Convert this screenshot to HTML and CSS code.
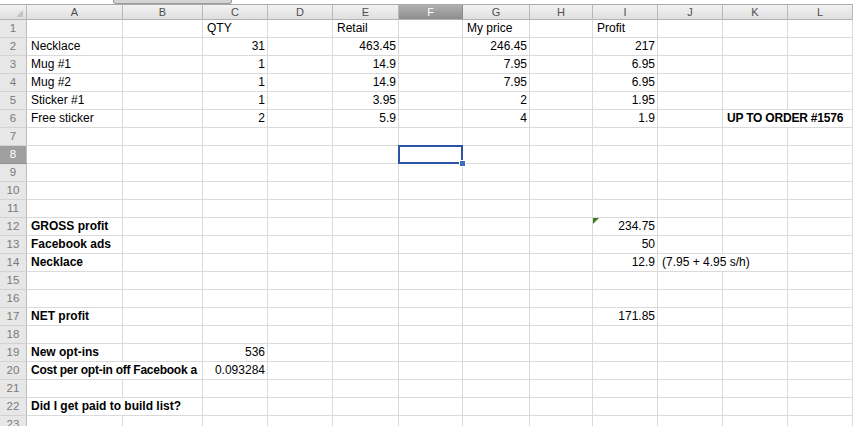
FILE: index.html
```html
<!DOCTYPE html>
<html>
<head>
<meta charset="utf-8">
<link rel="stylesheet" href="styles.css">
</head>
<body>
<div class="sheet">
  <div class="top"><div class="tb"></div></div>
  <div class="row hdr">
    <div class="h corner"></div><div class="h">A</div><div class="h">B</div><div class="h">C</div><div class="h">D</div><div class="h">E</div><div class="h hsel">F</div><div class="h">G</div><div class="h">H</div><div class="h">I</div><div class="h">J</div><div class="h">K</div><div class="h">L</div>
  </div>
  <div class="row"><div class="c rn">1</div><div class="c"></div><div class="c"></div><div class="c">QTY</div><div class="c"></div><div class="c">Retail</div><div class="c"></div><div class="c">My price</div><div class="c"></div><div class="c">Profit</div><div class="c"></div><div class="c"></div><div class="c"></div></div>
  <div class="row"><div class="c rn">2</div><div class="c">Necklace</div><div class="c"></div><div class="c n">31</div><div class="c"></div><div class="c n">463.45</div><div class="c"></div><div class="c n">246.45</div><div class="c"></div><div class="c n">217</div><div class="c"></div><div class="c"></div><div class="c"></div></div>
  <div class="row"><div class="c rn">3</div><div class="c">Mug #1</div><div class="c"></div><div class="c n">1</div><div class="c"></div><div class="c n">14.9</div><div class="c"></div><div class="c n">7.95</div><div class="c"></div><div class="c n">6.95</div><div class="c"></div><div class="c"></div><div class="c"></div></div>
  <div class="row"><div class="c rn">4</div><div class="c">Mug #2</div><div class="c"></div><div class="c n">1</div><div class="c"></div><div class="c n">14.9</div><div class="c"></div><div class="c n">7.95</div><div class="c"></div><div class="c n">6.95</div><div class="c"></div><div class="c"></div><div class="c"></div></div>
  <div class="row"><div class="c rn">5</div><div class="c">Sticker #1</div><div class="c"></div><div class="c n">1</div><div class="c"></div><div class="c n">3.95</div><div class="c"></div><div class="c n">2</div><div class="c"></div><div class="c n">1.95</div><div class="c"></div><div class="c"></div><div class="c"></div></div>
  <div class="row"><div class="c rn">6</div><div class="c">Free sticker</div><div class="c"></div><div class="c n">2</div><div class="c"></div><div class="c n">5.9</div><div class="c"></div><div class="c n">4</div><div class="c"></div><div class="c n">1.9</div><div class="c"></div><div class="c b s2 tight">UP TO ORDER #1576</div></div>
  <div class="row"><div class="c rn">7</div><div class="c"></div><div class="c"></div><div class="c"></div><div class="c"></div><div class="c"></div><div class="c"></div><div class="c"></div><div class="c"></div><div class="c"></div><div class="c"></div><div class="c"></div><div class="c"></div></div>
  <div class="row"><div class="c rn rsel">8</div><div class="c"></div><div class="c"></div><div class="c"></div><div class="c"></div><div class="c"></div><div class="c active"><div class="selbox"></div><div class="handle"></div></div><div class="c"></div><div class="c"></div><div class="c"></div><div class="c"></div><div class="c"></div><div class="c"></div></div>
  <div class="row"><div class="c rn">9</div><div class="c"></div><div class="c"></div><div class="c"></div><div class="c"></div><div class="c"></div><div class="c"></div><div class="c"></div><div class="c"></div><div class="c"></div><div class="c"></div><div class="c"></div><div class="c"></div></div>
  <div class="row"><div class="c rn">10</div><div class="c"></div><div class="c"></div><div class="c"></div><div class="c"></div><div class="c"></div><div class="c"></div><div class="c"></div><div class="c"></div><div class="c"></div><div class="c"></div><div class="c"></div><div class="c"></div></div>
  <div class="row"><div class="c rn">11</div><div class="c"></div><div class="c"></div><div class="c"></div><div class="c"></div><div class="c"></div><div class="c"></div><div class="c"></div><div class="c"></div><div class="c"></div><div class="c"></div><div class="c"></div><div class="c"></div></div>
  <div class="row"><div class="c rn">12</div><div class="c b">GROSS profit</div><div class="c"></div><div class="c"></div><div class="c"></div><div class="c"></div><div class="c"></div><div class="c"></div><div class="c"></div><div class="c n note"><span class="tri"></span>234.75</div><div class="c"></div><div class="c"></div><div class="c"></div></div>
  <div class="row"><div class="c rn">13</div><div class="c b">Facebook ads</div><div class="c"></div><div class="c"></div><div class="c"></div><div class="c"></div><div class="c"></div><div class="c"></div><div class="c"></div><div class="c n">50</div><div class="c"></div><div class="c"></div><div class="c"></div></div>
  <div class="row"><div class="c rn">14</div><div class="c b">Necklace</div><div class="c"></div><div class="c"></div><div class="c"></div><div class="c"></div><div class="c"></div><div class="c"></div><div class="c"></div><div class="c n">12.9</div><div class="c s2">(7.95 + 4.95 s/h)</div><div class="c"></div></div>
  <div class="row"><div class="c rn">15</div><div class="c"></div><div class="c"></div><div class="c"></div><div class="c"></div><div class="c"></div><div class="c"></div><div class="c"></div><div class="c"></div><div class="c"></div><div class="c"></div><div class="c"></div><div class="c"></div></div>
  <div class="row"><div class="c rn">16</div><div class="c"></div><div class="c"></div><div class="c"></div><div class="c"></div><div class="c"></div><div class="c"></div><div class="c"></div><div class="c"></div><div class="c"></div><div class="c"></div><div class="c"></div><div class="c"></div></div>
  <div class="row"><div class="c rn">17</div><div class="c b">NET profit</div><div class="c"></div><div class="c"></div><div class="c"></div><div class="c"></div><div class="c"></div><div class="c"></div><div class="c"></div><div class="c n">171.85</div><div class="c"></div><div class="c"></div><div class="c"></div></div>
  <div class="row"><div class="c rn">18</div><div class="c"></div><div class="c"></div><div class="c"></div><div class="c"></div><div class="c"></div><div class="c"></div><div class="c"></div><div class="c"></div><div class="c"></div><div class="c"></div><div class="c"></div><div class="c"></div></div>
  <div class="row"><div class="c rn">19</div><div class="c b">New opt-ins</div><div class="c"></div><div class="c n">536</div><div class="c"></div><div class="c"></div><div class="c"></div><div class="c"></div><div class="c"></div><div class="c"></div><div class="c"></div><div class="c"></div><div class="c"></div></div>
  <div class="row"><div class="c rn">20</div><div class="c b s2 tight2">Cost per opt-in off Facebook a</div><div class="c n">0.093284</div><div class="c"></div><div class="c"></div><div class="c"></div><div class="c"></div><div class="c"></div><div class="c"></div><div class="c"></div><div class="c"></div><div class="c"></div></div>
  <div class="row"><div class="c rn">21</div><div class="c"></div><div class="c"></div><div class="c"></div><div class="c"></div><div class="c"></div><div class="c"></div><div class="c"></div><div class="c"></div><div class="c"></div><div class="c"></div><div class="c"></div><div class="c"></div></div>
  <div class="row"><div class="c rn">22</div><div class="c b s2">Did I get paid to build list?</div><div class="c"></div><div class="c"></div><div class="c"></div><div class="c"></div><div class="c"></div><div class="c"></div><div class="c"></div><div class="c"></div><div class="c"></div><div class="c"></div></div>
  <div class="row"><div class="c rn">23</div><div class="c"></div><div class="c"></div><div class="c"></div><div class="c"></div><div class="c"></div><div class="c"></div><div class="c"></div><div class="c"></div><div class="c"></div><div class="c"></div><div class="c"></div><div class="c"></div></div>
</div>
</body>
</html>
```
FILE: styles.css
```css
html, body {
  margin: 0;
  padding: 0;
  background: #fff;
  overflow: hidden;
}
body {
  font-family: "Liberation Sans", Arial, sans-serif;
  color: #000;
}
.sheet {
  width: 853px;
  height: 426px;
  overflow: hidden;
}
.top {
  height: 4px;
  display: flex;
  background: #fff;
}
.tb {
  margin-left: 113px;
  width: 117px;
  height: 3px;
  background: #d4d4d4;
  border: 1px solid #9a9a9a;
  border-top: none;
  border-radius: 0 0 3px 3px;
}
.row {
  display: grid;
  grid-template-columns: 27px 96px 80px 65px 65px 66px 64px 67px 63px 65px 65px 65px 1fr;
  height: 18px;
}
.hdr {
  height: 16px;
  border-top: 1px solid #a9a9a9;
  box-sizing: border-box;
  background: linear-gradient(#f3f3f3, #dddddd);
}
.h {
  box-sizing: border-box;
  border-right: 1px solid #b9b9b9;
  border-bottom: 1px solid #b3b3b3;
  font-size: 11px;
  line-height: 14px;
  color: #4f4f4f;
  text-align: center;
}
.corner {
  position: relative;
}
.corner::after {
  content: "";
  position: absolute;
  right: 3px;
  bottom: 2px;
  border-left: 7px solid transparent;
  border-bottom: 7px solid #c4c4c4;
}
.hsel {
  background: linear-gradient(#b0b0b0, #8e8e8e);
  color: #fff;
  border-right-color: #8a8a8a;
}
.c {
  box-sizing: border-box;
  border-right: 1px solid #dadada;
  border-bottom: 1px solid #dadada;
  padding: 0 3px 0 4px;
  font-size: 12px;
  line-height: 17px;
  white-space: nowrap;
  overflow: hidden;
}
.rn {
  background: #e7e7e7;
  color: #7a7a7a;
  text-align: center;
  font-size: 11.5px;
  padding: 0;
  border-right-color: #bdbdbd;
  border-bottom-color: #d2d2d2;
}
.rsel {
  background: #9f9f9f;
  color: #fff;
  border-bottom-color: #8f8f8f;
}
.n {
  text-align: right;
  padding-right: 2px;
}
.b {
  font-weight: bold;
}
.s2 {
  grid-column: span 2;
}
.tight {
  letter-spacing: -0.2px;
}
.tight2 {
  letter-spacing: -0.25px;
  padding-right: 0;
}
.active {
  position: relative;
  overflow: visible;
}
.selbox {
  position: absolute;
  left: -1px;
  top: -1px;
  right: -1px;
  bottom: -1px;
  border: 2px solid #2b55a4;
  z-index: 2;
}
.handle {
  position: absolute;
  right: -4px;
  bottom: -4px;
  width: 5px;
  height: 5px;
  background: #3a6fc4;
  border: 1px solid #fff;
  z-index: 3;
}
.note {
  position: relative;
}
.tri {
  position: absolute;
  left: 0;
  top: 0;
  width: 0;
  height: 0;
  border-top: 6px solid #3b7d23;
  border-right: 6px solid transparent;
}
```
